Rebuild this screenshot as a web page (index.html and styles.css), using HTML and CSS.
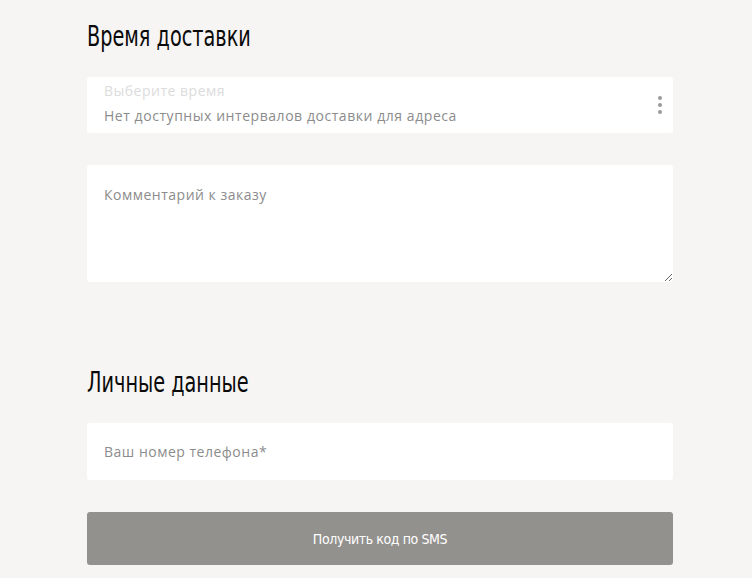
FILE: index.html
```html
<!DOCTYPE html>
<html lang="ru">
<head>
    <meta charset="UTF-8">
    <meta name="viewport" content="width=device-width, initial-scale=1.0">
    <title>Оформление заказа</title>
    <link rel="stylesheet" href="styles.css">
</head>
<body>
  <div class="container">
    <p class="title"><span class="title-text">Время доставки</span></p>

    <div class="select-field">
      <div class="select-text">
        <span class="select-label">Выберите время</span>
        <span class="select-value">Нет доступных интервалов доставки для адреса</span>
      </div>
      <span class="dots">
        <span class="dot"></span>
        <span class="dot"></span>
        <span class="dot"></span>
      </span>
    </div>

    <textarea class="comment" placeholder="Комментарий к заказу"></textarea>

    <p class="title title-personal"><span class="title-text">Личные данные</span></p>

    <input class="phone" type="text" placeholder="Ваш номер телефона*">

    <button class="sms-button">Получить код по SMS</button>
  </div>
</body>
</html>
```

FILE: styles.css
```css
body {
  margin: 0;
  background-color: #f6f5f3;
  font-family: 'Open Sans', 'Noto Sans', sans-serif;
}

.container {
  width: 586px;
  margin-left: 87px;
  display: flex;
  flex-direction: column;
}

.title {
  font-family: 'DejaVu Sans Condensed', 'DejaVu Sans', sans-serif;
  font-stretch: condensed;
  font-size: 28px;
  color: #0a0a0a;
  margin: 20px 0 23px 0;
  line-height: 34px;
}

.title-text {
  display: inline-block;
  transform: scaleX(0.765);
  transform-origin: left center;
}

.title-personal {
  margin-top: 84px;
}

.select-field {
  background-color: white;
  border-radius: 3px;
  height: 56px;
  display: flex;
  align-items: flex-start;
  justify-content: space-between;
  padding: 4px 11px 0 17px;
  box-sizing: border-box;
}

.select-text {
  display: flex;
  flex-direction: column;
}

.select-label {
  font-size: 14px;
  color: #dcdcdc;
  line-height: 20px;
  letter-spacing: 0.5px;
}

.select-value {
  font-size: 14px;
  color: #8c8c8c;
  line-height: 20px;
  margin-top: 5px;
  letter-spacing: 0.55px;
}

.dots {
  align-self: center;
  display: flex;
  flex-direction: column;
  gap: 3px;
  margin-top: -4px;
}

.dot {
  width: 4px;
  height: 4px;
  border-radius: 50%;
  background-color: #9a9a9a;
}

.comment {
  margin-top: 32px;
  height: 117px;
  border: none;
  border-radius: 3px;
  padding: 20px 17px;
  box-sizing: border-box;
  font-family: 'Open Sans', 'Noto Sans', sans-serif;
  font-size: 14px;
  letter-spacing: 0.5px;
  outline: none;
}

.comment::placeholder,
.phone::placeholder {
  color: #8c8c8c;
}

.phone {
  height: 57px;
  border: none;
  border-radius: 3px;
  padding: 0 17px;
  box-sizing: border-box;
  font-family: 'Open Sans', 'Noto Sans', sans-serif;
  font-size: 14px;
  letter-spacing: 0.5px;
  outline: none;
}

.sms-button {
  margin-top: 32px;
  height: 53px;
  background-color: #93918e;
  border: none;
  border-radius: 3px;
  color: white;
  font-family: 'DejaVu Sans Condensed', 'DejaVu Sans', sans-serif;
  font-stretch: condensed;
  font-size: 14px;
  letter-spacing: -0.4px;
  cursor: pointer;
}
```
